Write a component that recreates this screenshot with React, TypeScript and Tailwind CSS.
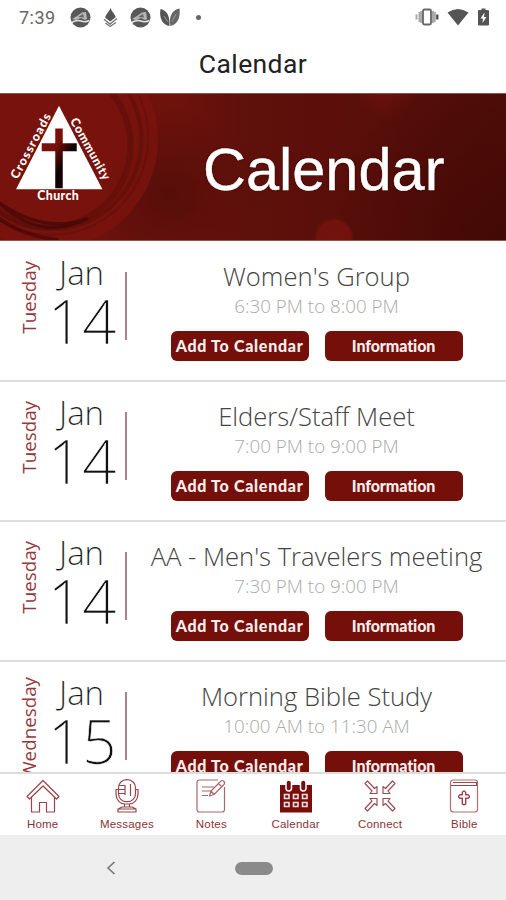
import React from "react";

type Event = {
  weekday: string;
  month: string;
  day: string;
  title: string;
  time: string;
};

const events: Event[] = [
  { weekday: "Tuesday", month: "Jan", day: "14", title: "Women's Group", time: "6:30 PM to 8:00 PM" },
  { weekday: "Tuesday", month: "Jan", day: "14", title: "Elders/Staff Meet", time: "7:00 PM to 9:00 PM" },
  { weekday: "Tuesday", month: "Jan", day: "14", title: "AA - Men's Travelers meeting", time: "7:30 PM to 9:00 PM" },
  { weekday: "Wednesday", month: "Jan", day: "15", title: "Morning Bible Study", time: "10:00 AM to 11:30 AM" },
];

function EmblemIcon() {
  return (
    <svg width="21" height="21" viewBox="0 0 21 21">
      <circle cx="10.5" cy="10.5" r="10" fill="#585858" />
      <path d="M2 12 L7 9 L12 5.5 L16 5 L17 12 L15 13 L11 11 L6 13 Z" fill="#b5b5b5" />
      <path d="M8 10 L13 7 L14 10.5 Z" fill="#666" />
      <path d="M1.5 15.5 Q7 12.5 11 14 T19.5 13.5" stroke="#e2e2e2" strokeWidth="1.5" fill="none" />
    </svg>
  );
}

function StatusBar() {
  return (
    <div className="flex h-9 shrink-0 items-start justify-between pt-[6px] pr-[17px] pl-[19px]">
      <div className="flex items-center">
        <span className="w-[51px] pt-px font-['Roboto',sans-serif] text-[18px] leading-[21px] tracking-[0.5px] text-[#666]">7:39</span>
        <EmblemIcon />
        <svg className="ml-[12px]" width="15" height="21" viewBox="0 0 15 21">
          <path d="M7.5 0.5 C8 4 12 6.500 13 11 L7.500 15 L2 11 C3 6.500 7 4 7.500 0.500Z" fill="#555" />
          <path d="M1 10.500 L7 15.500 L14 10 M1 14 L7 18.500 L14 13" fill="none" stroke="#fff" strokeWidth="1.200" />
          <path d="M1 12.300 L7 17 L14 11.500 M2.500 16 L7 19.500 L13 15.500" fill="none" stroke="#777" strokeWidth="1.400" />
        </svg>
        <div className="ml-[12px]"><EmblemIcon /></div>
        <svg className="ml-[9px]" width="20" height="20" viewBox="0 0 20 20">
          <path d="M0.500 2 C6 3 10 8 9.500 19 C2 18 -1 10 0.500 2Z" fill="#555" />
          <path d="M19.500 1.500 C12 3 8.500 10 10.500 19 C18 17 20.500 10 19.500 1.500Z" fill="#666" />
          <path d="M4 9 L8 15 M16 7 L12 15" stroke="#aaa" strokeWidth="0.800" />
        </svg>
        <span className="ml-[16px] size-[5px] rounded-full bg-[#666]" />
      </div>
      <div className="flex items-center pt-[2px]">
        <svg width="24" height="18" viewBox="0 0 24 18">
          <path d="M1.500 6.500v5 M4.500 4v10 M6.300 3v12" stroke="#aaa" strokeWidth="2" />
          <rect x="8" y="1.500" width="8" height="15" rx="1.500" fill="#fff" stroke="#666" strokeWidth="1.800" />
          <path d="M18 3v12 M19.800 4v10" stroke="#aaa" strokeWidth="2" />
          <path d="M22.300 6.500v5" stroke="#444" strokeWidth="2.200" />
        </svg>
        <svg className="ml-[8px]" width="22" height="18" viewBox="0 0 22 18">
          <path d="M0.500 4.500 Q11 -2.500 21.500 4.500 L11 17.500Z" fill="#555" />
        </svg>
        <svg className="ml-[9px]" width="11" height="18" viewBox="0 0 11 18">
          <path d="M1 2h2.500V0.500h4V2H10q1 0 1 1v13.500q0 1-1 1H1q-1 0-1-1V3q0-1 1-1Z" fill="#555" />
          <path d="M6.500 4.500 L2.500 10.500H5L4.500 15 L8.500 9H6Z" fill="#fff" />
        </svg>
      </div>
    </div>
  );
}

function ChurchLogo() {
  const font = "Lato, 'Liberation Sans', sans-serif";
  return (
    <svg className="h-full w-[190px]" viewBox="0 0 190 148">
      <defs>
        <linearGradient id="cross" x1="0" y1="0" x2="1" y2="1">
          <stop offset="0.35" stopColor="#7b100a" />
          <stop offset="0.6" stopColor="#100203" />
        </linearGradient>
      </defs>
      <circle cx="48" cy="46" r="111" fill="#7b130d" opacity="0.8" />
      <g fill="none">
        <circle cx="50" cy="44" r="99" stroke="#5c0f0a" strokeWidth="2" opacity="0.45" />
        <circle cx="51" cy="46" r="91" stroke="#5c0f0a" strokeWidth="4" opacity="0.6" />
        <circle cx="48" cy="52" r="83" stroke="#5a0e09" strokeWidth="6" opacity="0.55" />
        <path d="M-5 108 Q40 151 88 126 Q42 143 -5 108Z" stroke="#430805" strokeWidth="3" opacity="0.75" />
        <path d="M-5 124 Q18 143 58 148" stroke="#430805" strokeWidth="4" opacity="0.7" />
      </g>
      <path d="M58.500 12 L102.500 96.500 H15Z" fill="#fff" />
      <path d="M54.700 35h7.600v15H76.500v8H62.300v37.500h-7.600V58H41v-8h13.700Z" fill="url(#cross)" />
      <g fill="#fff" fontFamily={font} fontWeight="900" fontSize="12.5">
        <text transform="translate(16.500 87) rotate(-62)" textLength="73">Crossroads</text>
        <text transform="translate(69.500 27) rotate(61)" textLength="70">Community</text>
        <text x="36.500" y="107.500" textLength="42">Church</text>
      </g>
    </svg>
  );
}

function Banner() {
  return (
    <div className="flex h-[148px] shrink-0 items-center overflow-hidden border-y border-[#8c5552] bg-[radial-gradient(circle_at_334px_144px,#74130f_0,#70120e_17px,transparent_20px),radial-gradient(circle_at_385px_-5px,#6d120d_0,transparent_30px),radial-gradient(circle_at_100%_100%,#430905_0,transparent_200px),radial-gradient(circle_at_170px_100px,#560e09_0,transparent_90px),linear-gradient(90deg,#70110c_0,#6e120c_180px,#5e100b_250px,#5b0f0a_380px,#4f0e09_100%)]">
      <ChurchLogo />
      <span className="ml-[13px] pt-[6px] font-['Liberation_Sans',Arial,sans-serif] text-[59.500px] leading-none whitespace-nowrap text-white [-webkit-text-stroke:0.400px_#fff] [text-shadow:0_0_2px_#2a0503]">Calendar</span>
    </div>
  );
}

function ActionButton({ label, spacing }: { label: string; spacing: string }) {
  return (
    <button className={`flex h-[30px] w-[138px] items-center justify-center rounded-[6px] bg-[#750f09] font-['Lato','Liberation_Sans',sans-serif] text-[16px] font-black whitespace-nowrap text-[#fbeeed] ${spacing}`}>
      {label}
    </button>
  );
}

function EventRow({ event }: { event: Event }) {
  const weekdayTop = event.weekday === "Wednesday" ? "pt-[15px]" : "pt-[19px]";
  return (
    <div className="flex h-[140px] shrink-0 border-b-2 border-[#dedede] font-['Open_Sans','Noto_Sans',sans-serif]">
      <div className={`flex w-[47px] items-start justify-end pr-[6px] ${weekdayTop}`}>
        <span className="rotate-180 text-[18.800px] leading-[23px] whitespace-nowrap text-[#95373a] [writing-mode:vertical-rl]">{event.weekday}</span>
      </div>
      <div className="flex w-[80px] shrink-0 flex-col pt-[13px] font-light text-[#111]">
        <span className="pl-[12px] text-[33px] leading-[35px] [-webkit-text-stroke:0.200px_#fff]">{event.month}</span>
        <span className="pl-px text-[60px] leading-[62px] [-webkit-text-stroke:0.600px_#fff]">{event.day}</span>
      </div>
      <div className="-ml-[2px] mt-[30px] h-[68px] w-[2px] shrink-0 bg-[#a88588]" />
      <div className="flex w-[379px] flex-col items-center pt-[17px]">
        <span className="text-[25.600px] leading-[36px] font-light whitespace-nowrap text-[#444]">{event.title}</span>
        <span className="text-[18.800px] leading-[23px] font-light whitespace-nowrap text-[#aaa]">{event.time}</span>
        <div className="mt-[13px] flex gap-[16px]">
          <ActionButton label="Add To Calendar" spacing="tracking-[0.7px]" />
          <ActionButton label="Information" spacing="tracking-[-0.1px]" />
        </div>
      </div>
    </div>
  );
}

const line = { fill: "none", stroke: "#9a4548", strokeWidth: 1.2, strokeLinejoin: "round" as const };

function HomeIcon() {
  return (
    <svg width="34" height="34" viewBox="0 0 34 34" {...line}>
      <path d="M5.500 18v15h8V23.500h7V33h8V18" />
      <path d="M17 1.500 L1 17.500 L3.500 20 L17 7 L30.500 20 L33 17.500Z" />
    </svg>
  );
}

function MicIcon() {
  return (
    <svg width="34" height="34" viewBox="0 0 34 34" {...line}>
      <rect x="8.500" y="0.700" width="17" height="22" rx="8" />
      <path d="M8.500 10.500H6v4.500c0 6 4 9.500 8.500 10v3 M25.500 10.500h2.500v4.500c0 6-4 9.500-8.500 10v3 M9 6.500h6 M9 10.500h6 M9 14.500h6 M15 6v10 M20.500 5v12 M14 25h6" />
      <path d="M8 33v-3l4-2h10l4 2v3Z M8 30h18" />
    </svg>
  );
}

function NotesIcon() {
  return (
    <svg width="34" height="34" viewBox="0 0 34 34" {...line} stroke="#a8676b">
      <path d="M24 1H5.500Q3 1 3 3.500v27Q3 33 5.500 33h22.500q2.500 0 2.500-2.500V8" />
      <path d="M8 8h12 M8 12h9 M8 16.500h6" />
      <path d="M15.500 17 L17 12 L26.500 2.500 Q28 0.500 30 2.500 Q31.500 4 29.500 6 L20 15.500Z M24.500 4.500l3 3 M17 12l3 3.500" />
    </svg>
  );
}

function CalendarIcon() {
  return (
    <svg width="34" height="34" viewBox="0 0 34 34">
      <path d="M1 6h32v27.500H1Z" fill="#790d0c" />
      <g fill="#790d0c" stroke="#fff" strokeWidth="1.500">
        <rect x="7" y="1" width="5.500" height="11" rx="2.700" />
        <rect x="21.500" y="1" width="5.500" height="11" rx="2.700" />
      </g>
      <path d="M5.500 15.500h4.500v4H5.500Z M14.500 15.500h4.500v4h-4.500Z M23.500 15.500h4.500v4h-4.500Z M5.500 23.500h4.500v4H5.500Z M14.500 23.500h4.500v4h-4.500Z M23.500 23.500h4.500v4h-4.500Z" fill="none" stroke="#f5dddd" strokeWidth="1.600" />
    </svg>
  );
}

function ConnectIcon() {
  const arrow = "M2 4.500 L4.500 2 L11.500 9.500 L14 7.500 V14.500 H7 L9 12Z";
  return (
    <svg width="34" height="34" viewBox="0 0 34 34" {...line} stroke="#965055">
      <path d={arrow} />
      <path d={arrow} transform="translate(34 0) scale(-1 1)" />
      <path d={arrow} transform="translate(0 34) scale(1 -1)" />
      <path d={arrow} transform="translate(34 34) scale(-1 -1)" />
    </svg>
  );
}

function BibleIcon() {
  return (
    <svg width="34" height="34" viewBox="0 0 34 34" {...line}>
      <path d="M6.500 1h21.500q2.500 0 2.500 2.500v27q0 2.500-3 2.500h-21q-3 0-3-3V4q0-3 3-3Z" stroke="#b06e72" />
      <path d="M4 6.500h26 M6 3.500h23.500v3" />
      <path d="M15.300 13.500q1.700-3 3.400 0v2.200h2.500q2.500 1.800 0 3.600h-2.500v5.500q-1.700 2-3.400 0v-5.500h-2.500q-2.500-1.800 0-3.600h2.500Z" strokeWidth="1.400" />
    </svg>
  );
}

const tabs = [
  { label: "Home", Icon: HomeIcon },
  { label: "Messages", Icon: MicIcon },
  { label: "Notes", Icon: NotesIcon },
  { label: "Calendar", Icon: CalendarIcon },
  { label: "Connect", Icon: ConnectIcon },
  { label: "Bible", Icon: BibleIcon },
];

function TabBar() {
  return (
    <nav className="grid h-[63px] shrink-0 grid-cols-6 border-t-2 border-[#d9dddd] bg-white">
      {tabs.map(({ label, Icon }) => (
        <div key={label} className="flex flex-col items-center pt-[5px] pl-px">
          <Icon />
          <span className="mt-[4px] font-['Liberation_Sans',Arial,sans-serif] text-[11.500px] leading-[14px] tracking-[0.200px] text-[#873338]">{label}</span>
        </div>
      ))}
    </nav>
  );
}

function SystemBar() {
  return (
    <div className="flex h-[65px] shrink-0 items-center bg-[#eeeeee]">
      <svg className="ml-[106px] h-[14px] w-[10px]" viewBox="0 0 10 14" fill="none" stroke="#777" strokeWidth="1.600">
        <path d="M8.500 1 L2 7 L8.500 13" />
      </svg>
      <span className="ml-[119px] mt-px h-[13px] w-[38px] rounded-full bg-[#8a8a8a]" />
    </div>
  );
}

export default function App() {
  return (
    <div className="flex h-[900px] w-[506px] flex-col overflow-hidden bg-white">
      <StatusBar />
      <header className="flex h-[57px] shrink-0 items-center justify-center pb-[2px] font-['Roboto',sans-serif] text-[26.500px] tracking-[0.400px] text-[#222]">
        Calendar
      </header>
      <Banner />
      <main className="flex min-h-0 flex-1 flex-col overflow-hidden pt-px">
        {events.map((event, index) => (
          <EventRow key={index} event={event} />
        ))}
      </main>
      <TabBar />
      <SystemBar />
    </div>
  );
}
